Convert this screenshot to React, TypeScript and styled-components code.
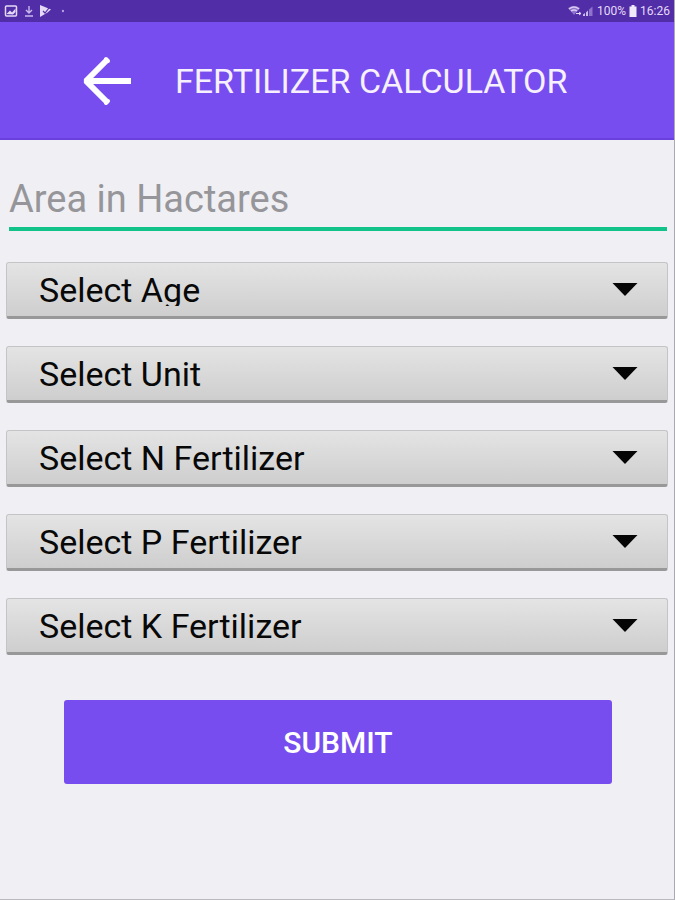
import React from "react";
import styled, { createGlobalStyle } from "styled-components";

const GlobalStyle = createGlobalStyle`
  *, *::before, *::after { box-sizing: border-box; }
  body {
    margin: 0;
    background: #f0eff4;
    font-family: Roboto, "Liberation Sans", sans-serif;
  }
`;

const Screen = styled.div`
  display: flex;
  flex-direction: column;
  min-height: 100vh;
  border-right: 1px solid #a9a9af;
  border-bottom: 1px solid #b9b9be;
  background: #f0eff4;
`;

const StatusBar = styled.div`
  display: flex;
  align-items: center;
  justify-content: space-between;
  height: 22px;
  padding: 0 4px;
  background: #522da8;
  color: #e4daf6;
  font-size: 12px;
  line-height: 22px;
`;

const StatusGroup = styled.div<{ $gap: number }>`
  display: flex;
  align-items: center;
  gap: ${(p) => p.$gap}px;
`;

const Header = styled.header`
  display: flex;
  align-items: center;
  gap: 41px;
  height: 118px;
  padding: 2px 80px 0;
  border-bottom: 2px solid #6a40dc;
  background: #774df0;
`;

const BackButton = styled.button`
  display: flex;
  padding: 0;
  border: 0;
  background: none;
  color: #fff;
  cursor: pointer;
`;

const Title = styled.h1`
  margin: 0;
  color: #f6f0ff;
  font-size: 34px;
  font-weight: 400;
  line-height: 40px;
  white-space: nowrap;
`;

const Form = styled.form`
  display: flex;
  flex-direction: column;
  padding: 32px 6px;
`;

const AreaInput = styled.input`
  height: 59px;
  margin: 0 1px 0 3px;
  padding: 0 0 1px;
  border: 0;
  border-bottom: 4px solid #12c389;
  border-radius: 0;
  outline: 0;
  background: transparent;
  color: #222;
  font: 400 38px Roboto, sans-serif;

  &::placeholder {
    color: #96969a;
    opacity: 1;
  }
`;

const Fields = styled.div`
  display: flex;
  flex-direction: column;
  gap: 27px;
  margin-top: 31px;
`;

const SelectBox = styled.div`
  display: grid;
  align-items: center;
  height: 57px;
  border: 1px solid #c4c4c6;
  border-bottom: 3px solid #989899;
  border-radius: 3px;
  background: linear-gradient(#e4e4e4, #cecece);
`;

const Select = styled.select`
  grid-area: 1 / 1;
  width: 100%;
  height: 53px;
  padding: 11px 72px 10px 32px;
  border: 0;
  appearance: none;
  background: transparent;
  color: #080808;
  font: 400 34px/32px Roboto, sans-serif;
`;

const Arrow = styled.svg`
  grid-area: 1 / 1;
  justify-self: end;
  margin-right: 29px;
  pointer-events: none;
`;

const SubmitButton = styled.button`
  height: 84px;
  margin: 45px 56px 0 58px;
  border: 0;
  border-radius: 3px;
  background: #774df0;
  color: #fff;
  font: 500 30px Roboto, sans-serif;
  cursor: pointer;
`;

const fields = ["Age", "Unit", "N Fertilizer", "P Fertilizer", "K Fertilizer"];

function SelectField({ name }: { name: string }) {
  const label = `Select ${name}`;
  return (
    <SelectBox>
      <Select aria-label={label} name={name} defaultValue="">
        <option value="">{label}</option>
      </Select>
      <Arrow width="26" height="13" viewBox="0 0 26 13" aria-hidden="true">
        <path d="M0.500 0H25.500L13 13Z" fill="#050505" />
      </Arrow>
    </SelectBox>
  );
}

export default function App() {
  return (
    <Screen>
      <GlobalStyle />
      <StatusBar>
        <StatusGroup $gap={7}>
          <svg width="14" height="12" viewBox="0 0 14 12" aria-hidden="true">
            <rect x="1.5" y="1" width="11" height="10" rx="1" fill="none" stroke="#e4daf6" strokeWidth="1.5" />
            <path d="M2.5 9 6 5.5 8 7.5 11.5 3.5V7L9 9.5Z" fill="#e4daf6" />
          </svg>
          <svg width="8" height="12" viewBox="0 0 8 12" aria-hidden="true">
            <path d="M4 1V8M1 5 4 8 7 5M0 11H8" fill="none" stroke="#c9b8ec" strokeWidth="1.4" />
          </svg>
          <svg width="11" height="12" viewBox="0 0 11 12" aria-hidden="true">
            <path d="M0 0 11 4.5 7.5 7.5 0 12Z" fill="#e4daf6" />
            <path d="M3 6 5 8 9 3" fill="none" stroke="#522da8" strokeWidth="1.2" />
          </svg>
          <svg width="6" height="12" viewBox="0 0 6 12" aria-hidden="true">
            <circle cx="5" cy="6" r="1.2" fill="#b49fe0" />
          </svg>
        </StatusGroup>
        <StatusGroup $gap={3}>
          <svg width="26" height="12" viewBox="0 0 26 12" aria-hidden="true">
            <path d="M0 3Q6-1 12 3L6 10Z" fill="#8e72cc" />
            <path d="M1 4Q6 0 11 4M3 6Q6 4 9 6" fill="none" stroke="#d9ccf2" strokeWidth="1.3" />
            <path d="M8 8.5H13M11 7 13 8.5 11 10" fill="none" stroke="#e4daf6" />
            <path d="M15 11V9.500L17 8V11ZM18 11V7.500L20 5.500V11Z" fill="#cbbceb" />
            <path d="M21 11V4.500L24.500 1.500V11Z" fill="#8e72cc" />
          </svg>
          <span>100%</span>
          <svg width="8" height="12" viewBox="0 0 8 12" aria-hidden="true">
            <path d="M2.500 0H5.500V1.500H7.500V12H.5V1.500H2.500Z" fill="#f0e9fb" />
          </svg>
          <span>16:26</span>
        </StatusGroup>
      </StatusBar>
      <Header>
        <BackButton type="button" aria-label="Back">
          <svg width="54" height="52" viewBox="0 0 54 52" aria-hidden="true">
            <path
              d="M27 5 6 26 27 47M6 26H51"
              fill="none"
              stroke="currentColor"
              strokeWidth="6"
              strokeLinejoin="bevel"
            />
            <path d="M26 4 28 6M26 48 28 46" stroke="currentColor" strokeWidth="4" strokeLinecap="round" />
          </svg>
        </BackButton>
        <Title>FERTILIZER CALCULATOR</Title>
      </Header>
      <Form onSubmit={(e: React.FormEvent) => e.preventDefault()}>
        <AreaInput type="text" aria-label="Area in Hactares" placeholder="Area in Hactares" />
        <Fields>
          {fields.map((name) => (
            <SelectField key={name} name={name} />
          ))}
        </Fields>
        <SubmitButton type="submit">SUBMIT</SubmitButton>
      </Form>
    </Screen>
  );
}
